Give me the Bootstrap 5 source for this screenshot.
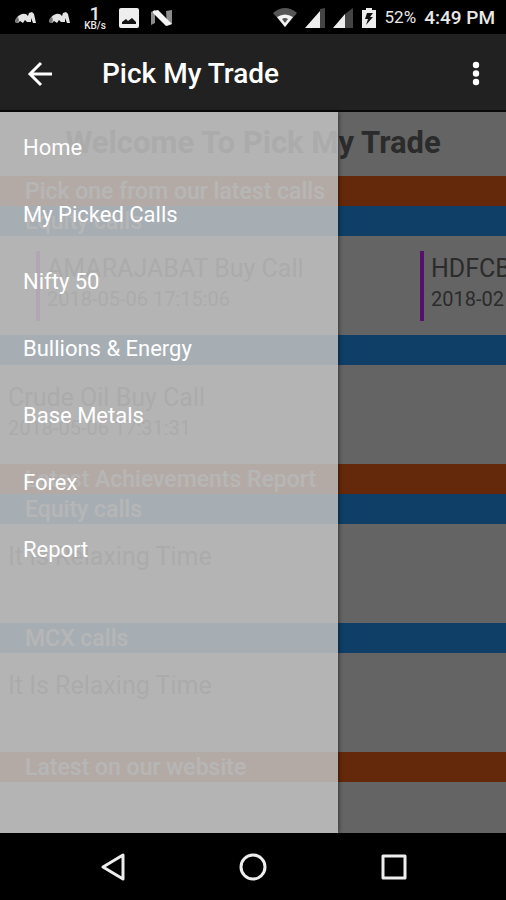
<!DOCTYPE html>
<html lang="en">
<head>
<meta charset="utf-8">
<meta name="viewport" content="width=device-width, initial-scale=1">
<title>Pick My Trade</title>
<link href="https://cdn.jsdelivr.net/npm/bootstrap@5.3.0/dist/css/bootstrap.min.css" rel="stylesheet">
<style>
body { font-family: Roboto, "Noto Sans", sans-serif; background: #000; color: #2b2b2b; }
svg { display: block; flex-shrink: 0; }
.status-bar { height: 34px; padding: 2px 11px 0 15px; color: #e8e8e8; font-weight: 500; }
.status-left { gap: 12px; }
.status-right { gap: 8px; }
.status-net { width: 24px; font-size: 19px; line-height: 15px; }
.status-unit { font-size: 10px; line-height: 10px; }
.status-battery { font-size: 17px; font-weight: 400; }
.status-clock { font-size: 19px; }
.app-bar { height: 78px; background: #212121; border-bottom: 2px solid #0a0a0a; padding: 3px 16px 0 26px; }
.app-title { font-size: 28px; font-weight: 500; line-height: 32px; margin-left: 48px; color: #fff; }
.page-area { background: #646464; }
.welcome { height: 64px; font-size: 31px; font-weight: 700; line-height: 62px; }
.band { height: 30px; padding: 0 25px; font-size: 23px; font-weight: 500; line-height: 32px; color: #707070; }
.band-orange { background: #64290a; }
.band-blue { background: #0f3f66; }
.calls { height: 99px; }
.call-row { padding-left: 36px; }
.call-item { flex: 0 0 384px; height: 70px; border-left: 4px solid #56106a; padding: 1px 7px; }
.call-title { font-size: 25px; line-height: 34px; }
.call-date { font-size: 20px; line-height: 26px; }
.drawer { width: calc(100% - 168px); padding-top: 2px; background: rgba(195, 195, 195, .84); box-shadow: 1px 0 4px rgba(0, 0, 0, .45); }
.drawer .nav-link { height: 67px; padding: 0 23px; font-size: 22px; line-height: 67px; color: #fff; }
.nav-keys { height: 67px; padding: 0 99px; }
</style>
</head>
<body>
<div class="d-flex flex-column min-vh-100 overflow-hidden">
  <div class="status-bar d-flex align-items-center justify-content-between">
    <div class="status-left d-flex align-items-center">
      <svg width="22" height="14" viewBox="0 0 22 14"><path d="M0 11Q1 5 7 3Q11 2 13 5L14 2 17 1 19 3 21 12H18L16 7 16 11H12L10 9 8 12 5 10 3 12Z" fill="#e4e4e4"/><path d="M0 11Q0 7 3 6L4 9 3 12Z" fill="#777"/></svg>
      <svg width="22" height="14" viewBox="0 0 22 14"><path d="M0 11Q1 5 7 3Q11 2 13 5L14 2 17 1 19 3 21 12H18L16 7 16 11H12L10 9 8 12 5 10 3 12Z" fill="#e4e4e4"/><path d="M0 11Q0 7 3 6L4 9 3 12Z" fill="#777"/></svg>
      <div class="status-net text-center">1<div class="status-unit">KB/s</div></div>
      <svg width="20" height="20" viewBox="0 0 20 20"><rect width="20" height="20" rx="2" fill="#eee"/><path d="M3 16V14L7 11 9 13 13 10 17 14V16Z" fill="#111"/></svg>
      <svg width="22" height="18" viewBox="0 0 22 18"><path d="M0 3L4 1V14L0 16Z M15 2L21 1V15L16 17Z" fill="#8c8c8c"/><path d="M2 2L7 1 21 15 15 17 2 4Z" fill="#f4f4f4"/></svg>
    </div>
    <div class="status-right d-flex align-items-center">
      <svg width="24" height="20" viewBox="0 0 24 20"><path d="M0 5Q12-5 24 5L12 19Z" fill="#555"/><path d="M4 9Q12 4 20 9L12 19Z" fill="#f4f4f4"/><path d="M9 11Q12 9 15 11L12 15Z" fill="#555"/></svg>
      <svg width="20" height="20" viewBox="0 0 20 20"><path d="M15 1L20 0V20H15Z" fill="#444"/><path d="M0 20L15 3V20Z" fill="#eee"/></svg>
      <svg width="20" height="20" viewBox="0 0 20 20"><path d="M12 6L20 0V20H12Z" fill="#444"/><path d="M0 20L12 6V20Z" fill="#eee"/></svg>
      <svg width="16" height="20" viewBox="0 0 16 20"><path d="M5 0H11V2H15V20H1V2H5Z" fill="#eee"/><path d="M6 5H12L9 9H12L5 17 7 11H4Z" fill="#111"/></svg>
      <span class="status-battery">52%</span>
      <span class="status-clock">4:49 PM</span>
    </div>
  </div>

  <header class="app-bar d-flex align-items-center">
    <button type="button" class="btn p-0 border-0" aria-label="Back">
      <svg width="28" height="28" viewBox="0 0 28 28" fill="none" stroke="#fff" stroke-width="3"><path d="M26 14H5M15 3L4 14 15 25"/></svg>
    </button>
    <h1 class="app-title mb-0">Pick My Trade</h1>
    <button type="button" class="btn p-0 border-0 ms-auto" aria-label="More options">
      <svg width="28" height="28" viewBox="0 0 28 28" fill="#fff"><circle cx="14" cy="5" r="3.2"/><circle cx="14" cy="13.5" r="3.2"/><circle cx="14" cy="22" r="3.2"/></svg>
    </button>
  </header>

  <div class="page-area position-relative flex-grow-1">
    <main class="overflow-hidden">
      <h2 class="welcome text-center text-nowrap mb-0">Welcome To Pick My Trade</h2>
      <h3 class="band band-orange mb-0">Pick one from our latest calls</h3>
      <h4 class="band band-blue mb-0">Equity calls</h4>
      <div class="calls call-row d-flex align-items-center overflow-hidden text-nowrap">
        <div class="call-item"><div class="call-title">AMARAJABAT Buy Call</div><div class="call-date">2018-05-06 17:15:06</div></div>
        <div class="call-item"><div class="call-title">HDFCB</div><div class="call-date">2018-02</div></div>
      </div>
      <h4 class="band band-blue mb-0"></h4>
      <div class="calls px-2 pt-3"><div class="call-title">Crude Oil Buy Call</div><div class="call-date">2018-05-06 17:31:31</div></div>
      <h3 class="band band-orange mb-0">Latest Achievements Report</h3>
      <h4 class="band band-blue mb-0">Equity calls</h4>
      <div class="calls px-2 pt-3"><div class="call-title">It Is Relaxing Time</div></div>
      <h4 class="band band-blue mb-0">MCX calls</h4>
      <div class="calls px-2 pt-3"><div class="call-title">It Is Relaxing Time</div></div>
      <h3 class="band band-orange mb-0">Latest on our website</h3>
    </main>
    <nav class="drawer nav flex-column flex-nowrap position-absolute top-0 start-0 h-100" aria-label="Main menu">
      <a class="nav-link" href="#">Home</a>
      <a class="nav-link" href="#">My Picked Calls</a>
      <a class="nav-link" href="#">Nifty 50</a>
      <a class="nav-link" href="#">Bullions &amp; Energy</a>
      <a class="nav-link" href="#">Base Metals</a>
      <a class="nav-link" href="#">Forex</a>
      <a class="nav-link" href="#">Report</a>
    </nav>
  </div>

  <footer class="nav-keys position-relative d-flex align-items-center justify-content-between bg-black">
    <button type="button" class="btn p-0 border-0" aria-label="Back key"><svg width="28" height="28" viewBox="0 0 28 28" fill="none" stroke="#eee" stroke-width="3" stroke-linejoin="round"><path d="M24 2V26L4 14Z"/></svg></button>
    <button type="button" class="btn p-0 border-0" aria-label="Home key"><svg width="28" height="28" viewBox="0 0 28 28" fill="none" stroke="#eee" stroke-width="3"><circle cx="14" cy="14" r="12"/></svg></button>
    <button type="button" class="btn p-0 border-0" aria-label="Recent apps key"><svg width="28" height="28" viewBox="0 0 28 28" fill="none" stroke="#eee" stroke-width="3" stroke-linejoin="round"><rect x="4" y="3" width="22" height="22"/></svg></button>
  </footer>
</div>
<script src="https://cdn.jsdelivr.net/npm/bootstrap@5.3.0/dist/js/bootstrap.bundle.min.js"></script>
</body>
</html>
